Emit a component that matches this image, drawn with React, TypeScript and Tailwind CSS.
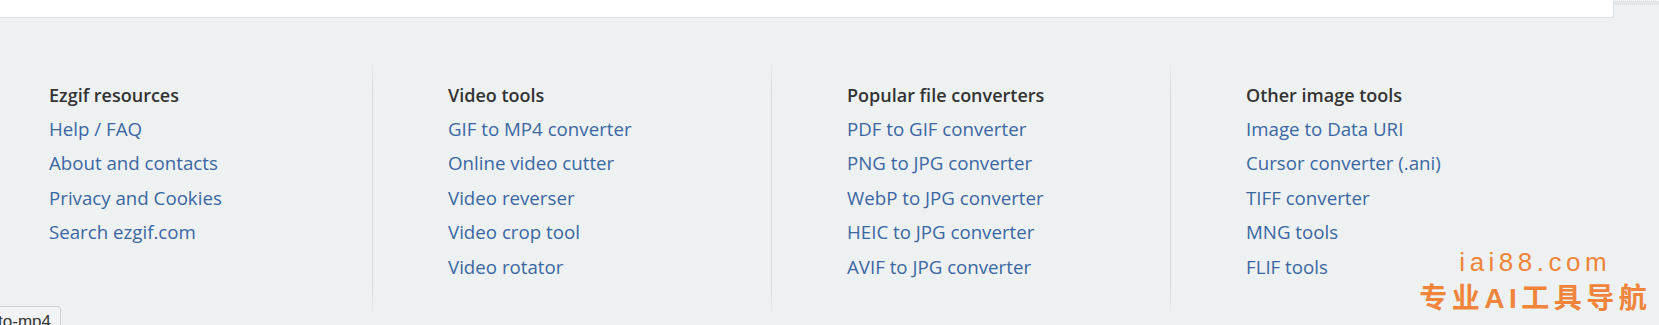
import React from "react";

const columns = [
  {
    title: "Ezgif resources",
    links: ["Help / FAQ", "About and contacts", "Privacy and Cookies", "Search ezgif.com"],
  },
  {
    title: "Video tools",
    links: ["GIF to MP4 converter", "Online video cutter", "Video reverser", "Video crop tool", "Video rotator"],
  },
  {
    title: "Popular file converters",
    links: ["PDF to GIF converter", "PNG to JPG converter", "WebP to JPG converter", "HEIC to JPG converter", "AVIF to JPG converter"],
  },
  {
    title: "Other image tools",
    links: ["Image to Data URI", "Cursor converter (.ani)", "TIFF converter", "MNG tools", "FLIF tools"],
  },
];

function Column({ title, links }: { title: string; links: string[] }) {
  return (
    <div className="flex flex-col pt-[18px]">
      <h3 className="text-[18px] leading-[34px] font-semibold text-[#333333]">{title}</h3>
      <ul className="flex flex-col">
        {links.map((l) => (
          <li key={l} className="h-[34.4px]">
            <a href="#" className="text-[18.7px] leading-[34.4px] text-[#3a67a2]">
              {l}
            </a>
          </li>
        ))}
      </ul>
    </div>
  );
}

function Divider() {
  return (
    <div className="w-px self-stretch bg-[linear-gradient(to_bottom,transparent,#d6dadd_12%,#d6dadd_88%,transparent)]" />
  );
}

export default function App() {
  return (
    <div
      className="relative w-full h-[325px] overflow-hidden bg-[#eef1f2]"
      style={{ fontFamily: '"Open Sans", "Noto Sans", sans-serif' }}
    >
      {/* top strip */}
      <div className="flex">
        <div className="w-[1614px] h-[18px] bg-white border-b border-r border-[#dde1e4] rounded-br-[3px]" />
        <div className="flex-1 h-[5px] border-t border-dotted border-white bg-[#e2e7ea]" />
      </div>

      {/* footer columns */}
      <div className="flex h-[258px] mt-[42px] pl-[49px]">
        <div className="w-[323px]">
          <Column {...columns[0]} />
        </div>
        <Divider />
        <div className="w-[398px] pl-[75px]">
          <Column {...columns[1]} />
        </div>
        <Divider />
        <div className="w-[398px] pl-[75px]">
          <Column {...columns[2]} />
        </div>
        <Divider />
        <div className="w-[398px] pl-[75px]">
          <Column {...columns[3]} />
        </div>
      </div>

      {/* watermark overlay */}
      <div
        className="absolute left-[1413px] top-[247px] w-[240px] flex flex-col items-center text-[#f0843a] whitespace-nowrap"
        style={{ fontFamily: '"Liberation Sans", "Noto Sans CJK SC", sans-serif' }}
      >
        <div className="text-[26px] leading-[30px] tracking-[4.5px] pl-[4.5px]">iai88.com</div>
        <div className="mt-[4px] text-[28px] leading-[36px] font-bold tracking-[4.5px] pl-[4.5px]">专业AI工具导航</div>
      </div>

      {/* browser status bubble */}
      <div
        className="absolute left-0 bottom-0 w-[61px] h-[19px] overflow-hidden flex justify-end bg-[#f1f3f4] border-t border-r border-[#cfd2d4] rounded-tr-[4px]"
        style={{ fontFamily: '"Liberation Sans", sans-serif' }}
      >
        <span className="text-[17px] leading-[18px] pt-[6px] pr-[9px] whitespace-nowrap text-[#333333]">to-mp4</span>
      </div>
    </div>
  );
}
